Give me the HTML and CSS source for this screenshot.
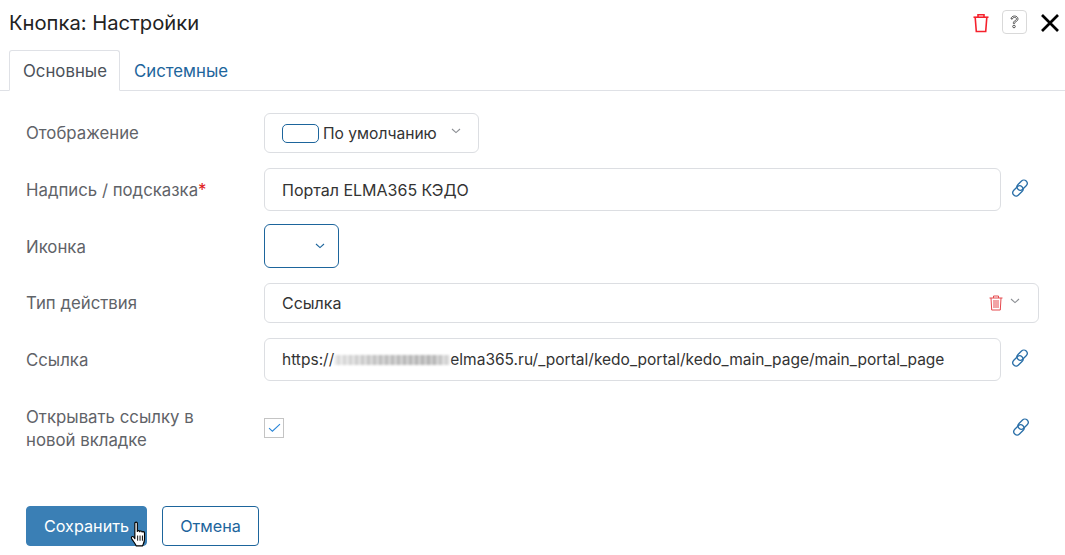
FILE: index.html
```html
<!DOCTYPE html>
<html lang="ru">
<head>
<meta charset="utf-8">
<title>Кнопка: Настройки</title>
<link rel="stylesheet" href="styles.css">
</head>
<body>
<svg class="defs" width="0" height="0" aria-hidden="true">
  <symbol id="link" viewBox="0 0 20 20">
    <g fill="none" stroke="currentColor" stroke-width="1.3">
      <rect x="8.800" y="1.300" width="6.600" height="11.600" rx="3.300" transform="rotate(45 12.100 7.100)"/>
      <rect x="4.600" y="7.100" width="6.600" height="11.600" rx="3.300" transform="rotate(45 7.900 12.900)"/>
    </g>
  </symbol>
  <symbol id="chev" viewBox="0 0 10 6">
    <path d="M1 1l4 3.600L9 1" fill="none" stroke="currentColor" stroke-width="1.100"/>
  </symbol>
</svg>
<main class="dialog">
  <header class="head">
    <h1 class="title">Кнопка: Настройки</h1>
    <div class="tools">
      <svg class="trash" width="16" height="20" viewBox="0 0 16 20"><g fill="none" stroke="#f5222d" stroke-width="1.600"><path d="M.5 4.200h15"/><path d="M5 4V1.800h6V4"/><path d="M2.200 4.500l1.100 14h9.400l1.100-14"/></g></svg>
      <span class="help"><svg width="9" height="14" viewBox="0 0 9 14"><path d="M1 4C1 2.200 2.600 1 4.500 1S8 2.200 8 3.900c0 1.500-1 2.200-2.300 2.900-.7.400-1 .8-1 1.600H3.300c0-1.400.6-2.100 1.700-2.700.9-.5 1.500-.9 1.500-1.800 0-.9-.9-1.500-2-1.500s-2 .6-2 1.600z" fill="none" stroke="#333" stroke-width=".8"/><circle cx="4" cy="11.500" r="1.300" fill="none" stroke="#333" stroke-width=".8"/></svg></span>
      <svg class="close" width="20" height="20" viewBox="0 0 20 20"><path d="M2 2l16 16M18 2L2 18" stroke="#000" stroke-width="2.700" fill="none"/></svg>
    </div>
  </header>
  <nav class="tabs">
    <span class="tab active">Основные</span>
    <span class="tab">Системные</span>
  </nav>
  <form class="form">
    <div class="row r-view">
      <label class="label">Отображение</label>
      <div class="box view-box">
        <span class="swatch"></span><span class="view-text">По умолчанию</span>
        <svg class="chev grey" width="10" height="6"><use href="#chev"/></svg>
      </div>
    </div>
    <div class="row r-text">
      <label class="label">Надпись / подсказка<span class="req">*</span></label>
      <div class="box wide tall">Портал ELMA365 КЭДО</div>
      <svg class="link" width="20" height="20"><use href="#link"/></svg>
    </div>
    <div class="row r-icon">
      <label class="label">Иконка</label>
      <div class="box icon-box"><svg class="chev blue" width="10" height="6"><use href="#chev"/></svg></div>
    </div>
    <div class="row r-type">
      <label class="label">Тип действия</label>
      <div class="box full">
        <span class="grow">Ссылка</span>
        <svg class="mini-trash" width="14" height="16" viewBox="0 0 14 16"><g fill="none" stroke="#e5484d" stroke-width="1"><path d="M.5 3h13"/><path d="M4.500 3V1h5v2"/><path d="M2 3l.7 12h8.600L12 3"/><path d="M5 5v8M7 5v8M9 5v8"/></g></svg>
        <svg class="chev grey type-chev" width="10" height="6"><use href="#chev"/></svg>
      </div>
    </div>
    <div class="row r-url">
      <label class="label">Ссылка</label>
      <div class="box wide tall url">https://<span class="blur"></span>elma365.ru/_portal/kedo_portal/kedo_main_page/main_portal_page</div>
      <svg class="link" width="20" height="20"><use href="#link"/></svg>
    </div>
    <div class="row r-check">
      <label class="label two">Открывать ссылку в новой вкладке</label>
      <div class="check-cell">
        <span class="check"><svg width="13" height="10" viewBox="0 0 13 10"><path d="M1 5.200l3.400 3L12 1.200" fill="none" stroke="#2a86d8" stroke-width="1.100"/></svg></span>
      </div>
      <svg class="link" width="20" height="20"><use href="#link"/></svg>
    </div>
    <div class="actions">
      <button type="button" class="btn primary">Сохранить</button>
      <button type="button" class="btn ghost">Отмена</button>
      <svg class="cursor" width="20" height="27" viewBox="0 0 18 26"><path d="M5 2.200c0-1.500 2.400-1.500 2.400 0V10c0-1 2.300-1 2.300.3 0-1 2.300-1 2.300.4 0-.8 2.300-.8 2.300.7v6.100c0 2.500-1.400 5-1.800 6.500H6.400C5.500 22 3.800 20 2 17.200c-1-1.700.7-3 2-1.700L5 17z" fill="#fff" stroke="#000" stroke-width="1.100" stroke-linejoin="round"/><path d="M7.700 14v5M10 14v5M12.300 14v5" stroke="#000" stroke-width=".9"/></svg>
    </div>
  </form>
</main>
</body>
</html>
```
FILE: styles.css
```css
* { box-sizing: border-box; }
html, body { margin: 0; padding: 0; }
body {
  width: 1065px;
  height: 555px;
  overflow: hidden;
  background: #fff;
  font-family: Inter, Roboto, "Liberation Sans", sans-serif;
  color: #333;
  font-size: 16px;
}
.defs { display: block; height: 0; }
.dialog { display: flex; flex-direction: column; height: 555px; }
.head {
  display: flex;
  align-items: center;
  justify-content: space-between;
  height: 50px;
  padding: 0 5px 4px 9px;
}
.title { margin: 0; font-size: 20.200px; font-weight: 400; color: #222; line-height: 26px; }
.tools { display: flex; align-items: center; }
.trash { margin-right: 13px; }
.help {
  display: flex;
  align-items: center;
  justify-content: center;
  width: 25px;
  height: 24px;
  border: 1px solid #d9d9d9;
  border-radius: 4px;
  margin: -2px 13px 0 0;
}
.tabs {
  display: flex;
  height: 41px;
  padding-left: 9px;
  border-bottom: 1px solid #dfe1e6;
}
.tab {
  height: 41px;
  padding: 10px 12px 0 13px;
  font-size: 16.800px;
  line-height: 20px;
  color: #1d659c;
  border: 1px solid transparent;
}
.tab.active {
  color: #4b5159;
  background: #fff;
  border-color: #dfe1e6;
  border-bottom-color: #fff;
  border-radius: 3px 3px 0 0;
}
.form { display: flex; flex-direction: column; padding: 22px 0 0 26px; }
.row { display: flex; align-items: center; }
.label {
  flex: 0 0 238px;
  font-size: 16.800px;
  line-height: 23px;
  color: #5f6368;
}
.r-text .label, .r-icon .label, .r-url .label { padding-top: 2px; }
.req { color: #e02020; }
.box {
  display: flex;
  align-items: center;
  border: 1px solid #dcdee2;
  border-radius: 6px;
  height: 40px;
  padding: 0 17px;
  font-size: 16px;
  color: #333;
  background: #fff;
}
.wide { width: 737px; }
.tall { height: 43px; }
.full { width: 775px; }
.grow { flex: 1; }
.r-text { margin-top: 15px; }
.r-icon { margin-top: 13px; }
.r-type { margin-top: 15px; }
.r-url { margin-top: 15px; }
.r-check { margin-top: 25px; height: 46px; }
.view-box { width: 215px; padding: 0 0 0 17px; }
.swatch {
  width: 37px;
  height: 19px;
  border: 1px solid #1d659c;
  border-radius: 5px;
  margin-right: 4px;
  flex: none;
}
.view-text { font-size: 15.600px; white-space: nowrap; }
.chev { display: block; flex: none; }
.grey { color: #8c8f94; }
.blue { color: #1d659c; }
.view-box .chev { margin: -5px 0 0 14px; }
.icon-box { width: 75px; height: 44px; border-color: #1d659c; padding: 0 0 0 50px; }
.mini-trash { margin-right: 7px; flex: none; }
.type-chev { margin: -4px 1px 0 0; }
.link { color: #2a6fa8; margin: -4px 0 0 9px; flex: none; }
.r-check .link { margin: -4px 0 0 727px; }
.url { white-space: nowrap; font-size: 15.530px; }
.blur {
  display: inline-block;
  width: 116px;
  height: 10px;
  margin: 0 0 -1px 0;
  background:
    repeating-linear-gradient(90deg, rgba(255,255,255,.25) 0 3px, rgba(0,0,0,.05) 3px 6px),
    linear-gradient(90deg, #e8e8e8, #c8c8c8 40%, #bcbcbc 85%, #e4e4e4);
  filter: blur(1px);
}
.check-cell { flex: none; width: 20px; margin-top: -2px; }
.check {
  display: flex;
  align-items: center;
  justify-content: center;
  width: 20px;
  height: 20px;
  border: 1px solid #c4c4c4;
}
.two { padding-right: 40px; }
.actions { position: relative; display: flex; gap: 15px; margin-top: 54px; }
.btn {
  height: 40px;
  border-radius: 4px;
  font: 400 16.200px Inter, Roboto, "Liberation Sans", sans-serif;
  padding: 0;
}
.primary { width: 121px; color: #fff; background: #3a7fb5; border: 1px solid #3a7fb5; }
.ghost { width: 97px; color: #1d659c; background: #fff; border: 1px solid #1d659c; }
.cursor { position: absolute; left: 103px; top: 15px; }
```
